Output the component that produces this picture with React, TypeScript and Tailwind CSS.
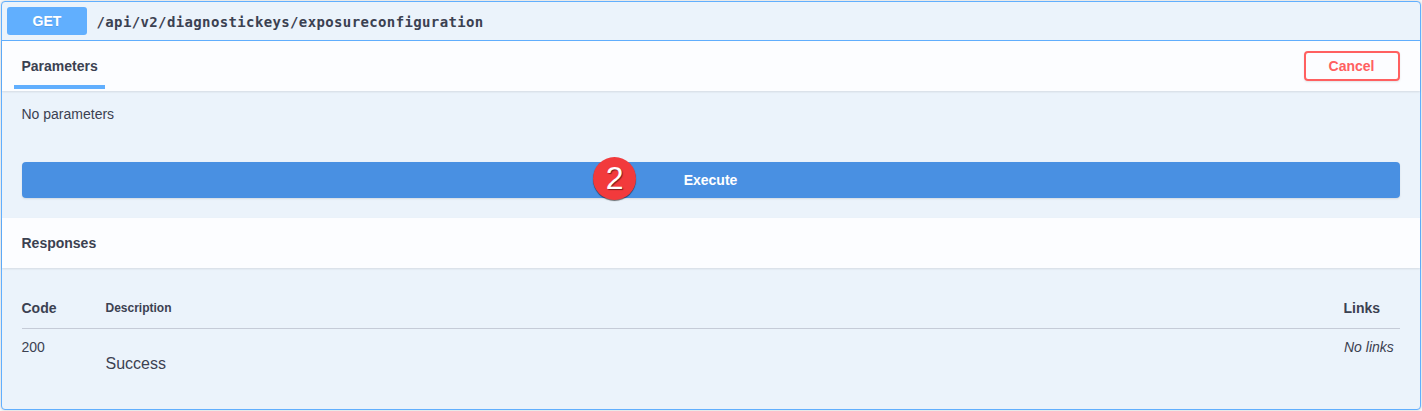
import type { ReactNode } from "react";

function SectionHeader({ children }: { children: ReactNode }) {
  return (
    <div className="relative z-10 flex h-[50px] items-center justify-between bg-[#fcfdff] pr-5 pl-[19.5px] shadow-[0_1px_2px_rgba(0,0,0,0.1)]">
      {children}
    </div>
  );
}

function StepBadge({ step }: { step: number }) {
  return (
    <span className="absolute -top-[5.5px] left-[571.2px] flex h-[43px] w-[43px] items-center justify-center rounded-full bg-[#f23a3c] text-[32px] leading-none font-normal text-white shadow-[0_1px_1px_rgba(0,0,0,0.55)] [text-shadow:1px_1px_1px_rgba(0,0,0,0.5)]">
      {step}
    </span>
  );
}

export default function App() {
  return (
    <div className="h-[411px] bg-[#fafafa] px-px pt-px font-['Liberation_Sans',Arial,sans-serif] text-sm text-[#3b4151]">
      <section className="flex h-[409px] flex-col rounded border border-[#61affe] bg-[#ebf3fb] shadow-[0_0_3px_rgba(0,0,0,0.19)]">
        <header className="flex h-[39px] shrink-0 items-center border-b border-[#61affe] px-[5px]">
          <span className="flex h-7 w-20 items-center justify-center rounded-[3px] bg-[#61affe] font-bold text-white [text-shadow:0_1px_0_rgba(0,0,0,0.1)]">
            GET
          </span>
          <span className="pt-0.5 pl-[9.5px] font-['DejaVu_Sans_Mono',Consolas,monospace] text-[14px] leading-5 font-bold tracking-[0.37px]">
            /api/v2/diagnostickeys/exposureconfiguration
          </span>
        </header>

        <SectionHeader>
          <h4 className="relative font-bold">
            Parameters
            <span className="absolute top-[29px] -left-[7.5px] h-1 w-[91px] bg-[#61affe]" />
          </h4>
          <button className="flex h-[30px] w-24 items-center justify-center rounded border-2 border-[#ff6060] pr-px font-bold text-[#ff6060] shadow-[0_1px_2px_rgba(0,0,0,0.1)]">
            Cancel
          </button>
        </SectionHeader>

        <div className="h-[127px] px-5 pt-[13px]">
          <p className="-ml-[0.5px] leading-5">No parameters</p>
          <button className="relative mt-[38px] flex h-9 w-full items-center justify-center rounded bg-[#4990e2] pr-px font-bold text-white shadow-[0_1px_2px_rgba(0,0,0,0.1)]">
            Execute
            <StepBadge step={2} />
          </button>
        </div>

        <SectionHeader>
          <h4 className="font-bold">Responses</h4>
        </SectionHeader>

        <div className="px-5 pt-[30px]">
          <div className="grid h-[31px] grid-cols-[84px_1fr_56px] border-b border-[#c5cbd7] leading-5">
            <span className="-ml-[0.5px] font-bold">Code</span>
            <span className="-ml-[0.5px] text-xs leading-5 font-bold">Description</span>
            <span className="-ml-[0.5px] font-bold">Links</span>
          </div>
          <div className="grid grid-cols-[84px_1fr_56px] pt-2 leading-5">
            <span className="-ml-[0.5px]">200</span>
            <span className="-ml-[0.5px] pt-[15px] text-base leading-6">Success</span>
            <em>No links</em>
          </div>
        </div>
      </section>
    </div>
  );
}
